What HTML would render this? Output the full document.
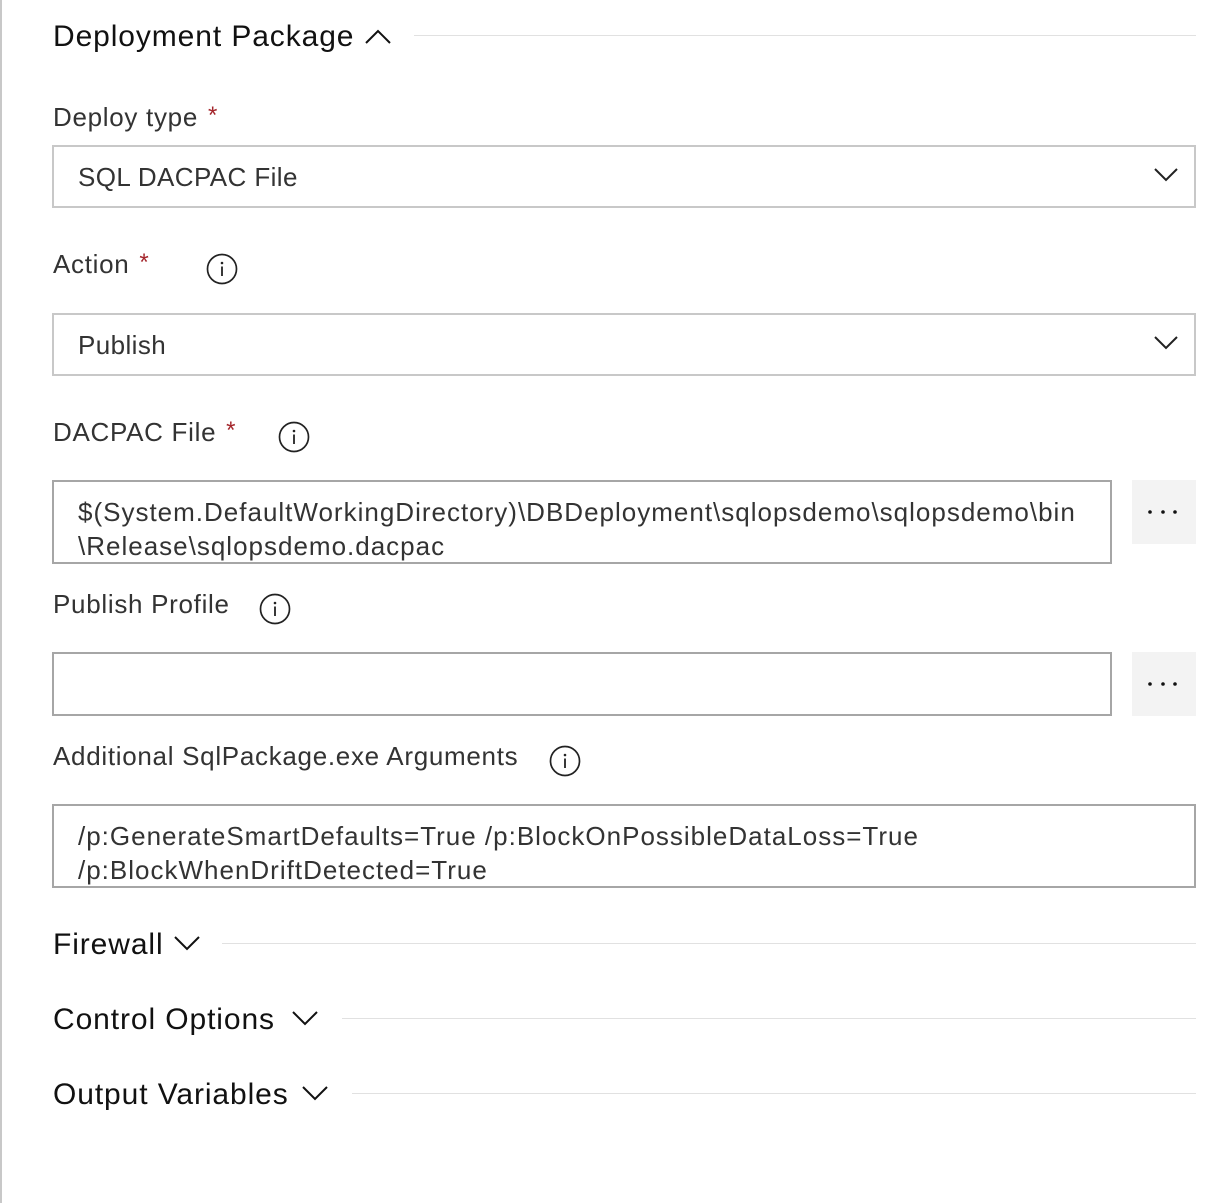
<!DOCTYPE html>
<html><head><meta charset="utf-8"><style>
*{margin:0;padding:0;box-sizing:border-box}
body{width:1231px;height:1203px;background:#fff;position:relative;overflow:hidden;font-family:"Liberation Sans",sans-serif;color:#212121}
.a{position:absolute;white-space:nowrap}
.lb{left:0;top:0;width:2px;height:1203px;background:#c8c8c8}
.h{font-size:30px;color:#111;line-height:36px;letter-spacing:0.9px}
.l{font-size:26px;color:#333;line-height:32px;letter-spacing:0.7px}
.req{color:#a4262c;font-size:24px;position:relative;top:-3px;margin-left:2px}
.box{position:absolute;border:2px solid #c8c8c8;background:#fff}
.tb{border-color:#a6a6a6}
.t{font-size:26px;color:#333;line-height:34px;position:absolute;left:24px;white-space:nowrap;letter-spacing:0.4px}
.btn{position:absolute;background:#f3f3f3;width:64px}
.hr{position:absolute;height:1px;background:#e1e1e1}
svg{position:absolute}
</style></head><body>
<div class="a lb"></div>

<div class="a h" style="left:53px;top:19px">Deployment Package</div>
<svg style="left:364px;top:27px" width="28" height="20"><path d="M2 16 L14 4 L26 16" fill="none" stroke="#111" stroke-width="2"/></svg>
<div class="hr" style="left:414px;top:35px;width:782px"></div>

<div class="a l" style="left:53px;top:101px">Deploy type <span class="req">*</span></div>
<div class="box" style="left:52px;top:145px;width:1144px;height:63px"><div class="t" style="top:13px">SQL DACPAC File</div></div>
<svg style="left:1153px;top:166px" width="26" height="18"><path d="M2 3 L13 14 L24 3" fill="none" stroke="#222" stroke-width="2"/></svg>

<div class="a l" style="left:53px;top:248px">Action <span class="req">*</span></div>
<svg style="left:206px;top:253px" width="32" height="32"><circle cx="16" cy="16" r="14.5" fill="none" stroke="#222" stroke-width="1.7"/><circle cx="16" cy="10" r="1.3" fill="#222"/><path d="M16 13.5 V23" stroke="#222" stroke-width="1.8"/></svg>
<div class="box" style="left:52px;top:313px;width:1144px;height:63px"><div class="t" style="top:13px">Publish</div></div>
<svg style="left:1153px;top:334px" width="26" height="18"><path d="M2 3 L13 14 L24 3" fill="none" stroke="#222" stroke-width="2"/></svg>

<div class="a l" style="left:53px;top:416px">DACPAC File <span class="req">*</span></div>
<svg style="left:278px;top:421px" width="32" height="32"><circle cx="16" cy="16" r="14.5" fill="none" stroke="#222" stroke-width="1.7"/><circle cx="16" cy="10" r="1.3" fill="#222"/><path d="M16 13.5 V23" stroke="#222" stroke-width="1.8"/></svg>
<div class="box tb" style="left:52px;top:480px;width:1060px;height:84px"><div class="t" style="top:13px;letter-spacing:1px">$(System.DefaultWorkingDirectory)\DBDeployment\sqlopsdemo\sqlopsdemo\bin<br>\Release\sqlopsdemo.dacpac</div></div>
<div class="btn" style="left:1132px;top:480px;height:64px"></div>
<svg style="left:1145px;top:506px" width="40" height="12"><circle cx="5" cy="6" r="1.8" fill="#111"/><circle cx="18" cy="6" r="1.8" fill="#111"/><circle cx="30" cy="6" r="1.8" fill="#111"/></svg>

<div class="a l" style="left:53px;top:588px">Publish Profile</div>
<svg style="left:259px;top:593px" width="32" height="32"><circle cx="16" cy="16" r="14.5" fill="none" stroke="#222" stroke-width="1.7"/><circle cx="16" cy="10" r="1.3" fill="#222"/><path d="M16 13.5 V23" stroke="#222" stroke-width="1.8"/></svg>
<div class="box tb" style="left:52px;top:652px;width:1060px;height:64px"></div>
<div class="btn" style="left:1132px;top:652px;height:64px"></div>
<svg style="left:1145px;top:678px" width="40" height="12"><circle cx="5" cy="6" r="1.8" fill="#111"/><circle cx="18" cy="6" r="1.8" fill="#111"/><circle cx="30" cy="6" r="1.8" fill="#111"/></svg>

<div class="a l" style="left:53px;top:740px">Additional SqlPackage.exe Arguments</div>
<svg style="left:549px;top:745px" width="32" height="32"><circle cx="16" cy="16" r="14.5" fill="none" stroke="#222" stroke-width="1.7"/><circle cx="16" cy="10" r="1.3" fill="#222"/><path d="M16 13.5 V23" stroke="#222" stroke-width="1.8"/></svg>
<div class="box tb" style="left:52px;top:804px;width:1144px;height:84px"><div class="t" style="top:13px;letter-spacing:1px">/p:GenerateSmartDefaults=True /p:BlockOnPossibleDataLoss=True<br>/p:BlockWhenDriftDetected=True</div></div>

<div class="a h" style="left:53px;top:927px">Firewall</div>
<svg style="left:173px;top:934px" width="28" height="18"><path d="M2 3 L14 15 L26 3" fill="none" stroke="#111" stroke-width="2"/></svg>
<div class="hr" style="left:222px;top:943px;width:974px"></div>

<div class="a h" style="left:53px;top:1002px">Control Options</div>
<svg style="left:291px;top:1009px" width="28" height="18"><path d="M2 3 L14 15 L26 3" fill="none" stroke="#111" stroke-width="2"/></svg>
<div class="hr" style="left:342px;top:1018px;width:854px"></div>

<div class="a h" style="left:53px;top:1077px">Output Variables</div>
<svg style="left:301px;top:1084px" width="28" height="18"><path d="M2 3 L14 15 L26 3" fill="none" stroke="#111" stroke-width="2"/></svg>
<div class="hr" style="left:352px;top:1093px;width:844px"></div>
</body></html>
